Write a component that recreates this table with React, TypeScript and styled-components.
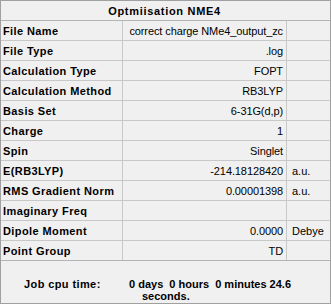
import styled, { createGlobalStyle } from 'styled-components';

interface Row {
  label: string;
  value: string;
  unit?: string;
}

const rows: Row[] = [
  { label: 'File Name', value: 'correct charge NMe4_output_zc' },
  { label: 'File Type', value: '.log' },
  { label: 'Calculation Type', value: 'FOPT' },
  { label: 'Calculation Method', value: 'RB3LYP' },
  { label: 'Basis Set', value: '6-31G(d,p)' },
  { label: 'Charge', value: '1' },
  { label: 'Spin', value: 'Singlet' },
  { label: 'E(RB3LYP)', value: '-214.18128420', unit: 'a.u.' },
  { label: 'RMS Gradient Norm', value: '0.00001398', unit: 'a.u.' },
  { label: 'Imaginary Freq', value: '' },
  { label: 'Dipole Moment', value: '0.0000', unit: 'Debye' },
  { label: 'Point Group', value: 'TD' },
];

const App = () => {
  return (
    <>
      <GlobalStyle />
      <Panel>
        <Title>Optmiisation NME4</Title>
        <Table>
          {rows.map((row) => (
            <TableRow key={row.label}>
              <Label>{row.label}</Label>
              <Value>{row.value}</Value>
              <Unit>{row.unit ?? ''}</Unit>
            </TableRow>
          ))}
        </Table>
        <Footer>
          <FooterLabel>Job cpu time:</FooterLabel>
          <FooterValue>
            <span>0 days&nbsp;&nbsp;0 hours&nbsp;&nbsp;0 minutes 24.6</span>
            <Wrapped>seconds.</Wrapped>
          </FooterValue>
        </Footer>
      </Panel>
    </>
  );
};

export default App;

const GlobalStyle = createGlobalStyle`
  html, body {
    margin: 0;
    padding: 0;
    background: #ffffff;
  }
  body {
    font-family: 'Liberation Sans', Arial, sans-serif;
    font-size: 11px;
    color: #000000;
  }
`;

const Panel = styled.div`
  box-sizing: border-box;
  width: 331px;
  height: 304px;
  border: 1px solid #a0a0a0;
  background: #f0f0f0;
  display: flex;
  flex-direction: column;
`;

const Title = styled.div`
  height: 19px;
  border-bottom: 1px solid #b4b4b4;
  display: flex;
  align-items: center;
  justify-content: center;
  font-weight: 700;
  font-size: 11px;
  letter-spacing: 0.7px;
  padding-right: 2px;
`;

const Table = styled.div`
  display: flex;
  flex-direction: column;
`;

const TableRow = styled.div`
  display: grid;
  grid-template-columns: 121px 165px 1fr;
  height: 20px;
  border-bottom: 1px solid #c8c8c8;
  box-sizing: border-box;
  &:last-child {
    border-bottom-color: #b4b4b4;
  }
`;

const Label = styled.div`
  display: flex;
  align-items: center;
  padding-left: 2px;
  font-weight: 700;
  letter-spacing: 0.4px;
  white-space: nowrap;
  overflow: hidden;
`;

const Value = styled.div`
  display: flex;
  align-items: center;
  justify-content: flex-end;
  padding-right: 3px;
  border-left: 1px solid #c8c8c8;
  border-right: 1px solid #c8c8c8;
  letter-spacing: -0.1px;
  white-space: nowrap;
  overflow: hidden;
`;

const Unit = styled.div`
  display: flex;
  align-items: center;
  padding-left: 5px;
  white-space: nowrap;
`;

const Footer = styled.div`
  flex: 1;
  display: flex;
  align-items: flex-start;
  padding: 17px 0 0 23px;
  font-weight: 700;
  line-height: 12px;
`;

const FooterLabel = styled.div`
  width: 105px;
  letter-spacing: 0.4px;
  white-space: nowrap;
`;

const FooterValue = styled.div`
  display: flex;
  flex-direction: column;
  white-space: nowrap;
`;

const Wrapped = styled.span`
  padding-left: 13px;
`;
